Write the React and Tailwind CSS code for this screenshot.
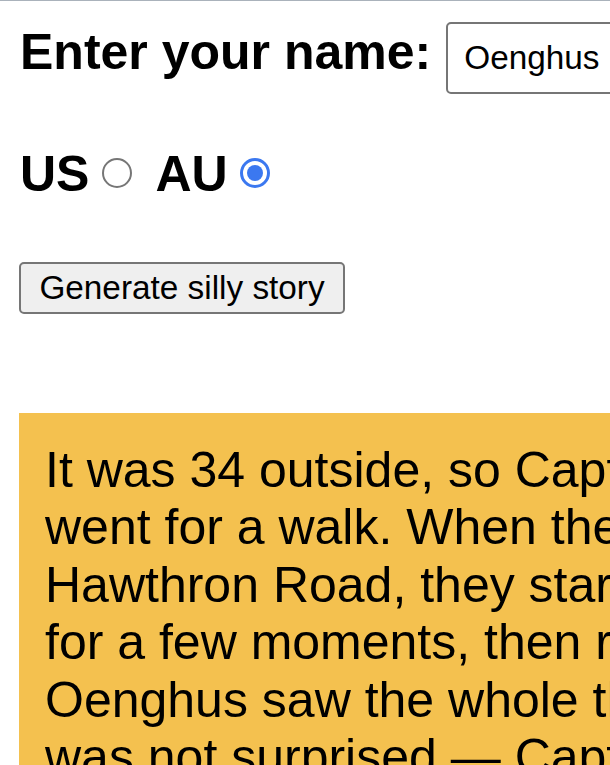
export default function App() {
  return (
    <div
      className="h-screen w-full overflow-hidden border-t border-[#aab2bb] bg-white text-black"
      style={{ fontFamily: '"Liberation Sans", Arial, sans-serif' }}
    >
      <div className="px-[20px] pt-[21px]">
        <div className="flex items-baseline gap-[15px] whitespace-nowrap">
          <label className="text-[50px] font-bold leading-[57.5px]">Enter your name:</label>
          <input
            type="text"
            defaultValue="Oenghus"
            className="w-[420px] shrink-0 rounded-[5px] border-2 border-[#767676] bg-white px-[16px] py-[15px] text-[33.33px] leading-[38px] outline-none"
          />
        </div>

        <div className="mt-[52px] flex items-center whitespace-nowrap">
          <span className="text-[50px] font-bold leading-[57.5px]">US</span>
          <span className="mb-[4px] ml-[13px] h-[30px] w-[30px] rounded-full border-[2.5px] border-[#767676] bg-white"></span>
          <span className="ml-[23px] text-[50px] font-bold leading-[57.5px]">AU</span>
          <span className="mb-[4px] ml-[12px] flex h-[30px] w-[30px] items-center justify-center rounded-full border-[3px] border-[#3b78f0] bg-white">
            <span className="h-[16px] w-[16px] rounded-full bg-[#3b78f0]"></span>
          </span>
        </div>

        <button className="-ml-px mt-[58px] h-[52px] w-[326px] rounded-[5px] border-2 border-[#767676] bg-[#efefef] text-[33.33px] leading-[38px]">
          Generate silly story
        </button>

        <div className="-ml-px mt-[99px] w-[890px] bg-[#f4c14f] px-[26px] pt-[29px] pb-[25px]">
          <p className="text-[50px] leading-[57.5px]">
            It was 34 outside, so Captain Cook went for a walk. When they got to Hawthron Road, they stared in horror
            for a few moments, then ran away. Oenghus saw the whole thing, but was not surprised — Captain Cook weighs
            300 pounds, and it was a hot day.
          </p>
        </div>
      </div>
    </div>
  );
}
